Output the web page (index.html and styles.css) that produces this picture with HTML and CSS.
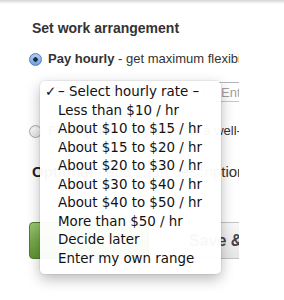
FILE: index.html
```html
<!DOCTYPE html>
<html lang="en">
<head>
  <meta charset="UTF-8">
  <title>Set work arrangement</title>
  <link rel="stylesheet" href="styles.css">
</head>
<body>
  <div class="shade"></div>

  <div class="page">
    <div class="panel">
      <h2>Set work arrangement</h2>

      <label class="option first">
        <span class="radio checked"></span>
        <span><b>Pay hourly</b> - get maximum flexibility as your project evolves</span>
      </label>

      <div class="rate-row">
        <div class="select-box">- Select hourly rate -</div>
        <input type="text" class="own-range" placeholder="Enter range">
      </div>

      <label class="option second">
        <span class="radio"></span>
        <span><b>Fixed price</b> - pay once for a well-defined project</span>
      </label>

      <div class="extra">
        <b>Optional</b> - add short description
      </div>

      <div class="buttons">
        <button type="button" class="btn-go">Post Job</button>
        <button type="button" class="btn-save">Save &amp; Continue</button>
      </div>
    </div>

    <ul class="menu">
      <li class="picked"><span class="tick">✓</span>– Select hourly rate –</li>
      <li>Less than $10 / hr</li>
      <li>About $10 to $15 / hr</li>
      <li>About $15 to $20 / hr</li>
      <li>About $20 to $30 / hr</li>
      <li>About $30 to $40 / hr</li>
      <li>About $40 to $50 / hr</li>
      <li>More than $50 / hr</li>
      <li>Decide later</li>
      <li>Enter my own range</li>
    </ul>
  </div>
</body>
</html>
```

FILE: styles.css
```css
html, body {
  min-height: 300px;
}
body {
  margin: 0;
  background-color: #fff;
  font-family: "Liberation Sans", Arial, sans-serif;
  color: #333;
}
.shade {
  height: 4px;
  background: linear-gradient(#d6d6d6, #fff);
}
.page {
  position: relative;
  min-height: 296px;
}
.panel {
  width: 239px;
  overflow: hidden;
  padding-left: 29px;
  box-sizing: border-box;
  white-space: nowrap;
}
h2 {
  margin: 15px 0 0 3px;
  font-size: 14px;
  line-height: 18px;
}
.option {
  display: flex;
  align-items: center;
  gap: 6px;
  font-size: 13px;
  line-height: 18px;
}
.option.first {
  margin-top: 13px;
}
.option.second {
  margin-top: 20px;
}
.radio {
  flex: none;
  width: 11px;
  height: 11px;
  border-radius: 50%;
  border: 1px solid #a9a9a9;
  background: linear-gradient(#fff, #e4e4e4);
  box-shadow: inset 0 1px 1px rgba(0,0,0,0.08);
}
.radio.checked {
  border-color: #5a7fb3;
  background: radial-gradient(circle, #1d2b45 0 2px, transparent 2.5px),
              linear-gradient(#b9d3f3, #6b9ee0);
}
.rate-row {
  display: flex;
  gap: 10px;
  margin-top: 14px;
  margin-left: 11px;
  height: 20px;
}
.select-box {
  flex: none;
  width: 165px;
  border: 1px solid #bbb;
  border-radius: 4px;
  font-size: 12px;
  line-height: 18px;
  padding-left: 6px;
  box-sizing: border-box;
}
.own-range {
  flex: none;
  width: 80px;
  height: 20px;
  margin: 0;
  padding: 0 6px;
  border: none;
  border-top: 1px solid #b4b4b4;
  border-bottom: 1px solid #c8c8c8;
  box-sizing: border-box;
  font-family: "Liberation Sans", Arial, sans-serif;
  font-size: 13px;
}
.own-range::placeholder {
  color: #a0a0a0;
}
.extra {
  margin: 22px 0 0 3px;
  font-size: 15px;
  line-height: 20px;
  color: #333;
}
.extra b {
  color: #222;
}
.buttons {
  display: flex;
  gap: 8px;
  margin-top: 40px;
}
.buttons button {
  flex: none;
  height: 37px;
  border-radius: 4px;
  font-family: "Liberation Sans", Arial, sans-serif;
  font-size: 16px;
  font-weight: bold;
  cursor: pointer;
}
.btn-go {
  width: 120px;
  border: 1px solid #4f7d2c;
  background: linear-gradient(#9ac86e, #78a94b 50%, #5f9334);
  color: #fff;
}
.btn-save {
  width: 120px;
  padding: 0 0 0 31px;
  text-align: left;
  border: 1px solid #c4c4c4;
  background: linear-gradient(#f7f7f7, #e6e6e6);
  color: #444;
}
.menu {
  position: absolute;
  left: 40px;
  top: 77px;
  width: 181px;
  margin: 0;
  padding: 2px 0 6px;
  list-style: none;
  background-color: rgba(255, 255, 255, 0.965);
  border-radius: 5px;
  box-shadow: 0 5px 14px rgba(0, 0, 0, 0.28), 0 0 0 1px rgba(0, 0, 0, 0.05);
  font-family: "DejaVu Sans", sans-serif;
  font-size: 13.4px;
  color: #111;
}
.menu li {
  line-height: 18.5px;
  padding-left: 18px;
  position: relative;
}
.tick {
  position: absolute;
  left: 5px;
}
```
